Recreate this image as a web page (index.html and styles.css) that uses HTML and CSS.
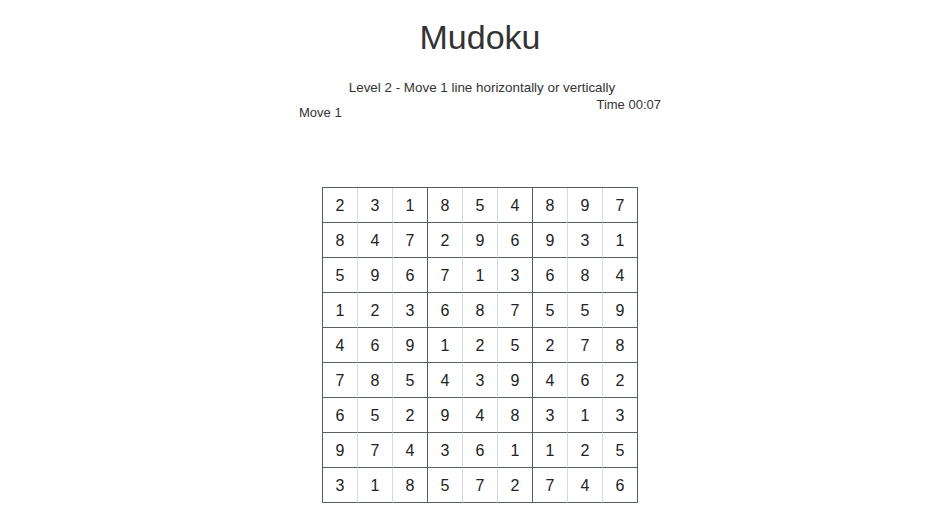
FILE: index.html
```html
<!DOCTYPE html>
<html>
<head>
<meta charset="utf-8">
<title>Mudoku</title>
<link rel="stylesheet" href="styles.css">
</head>
<body>
<div class="page">
  <h1 class="title">Mudoku</h1>
  <div class="level">Level 2 - Move 1 line horizontally or vertically</div>
  <div class="status">
    <span class="moves">Move 1</span>
    <span class="timer">Time 00:07</span>
  </div>
  <div class="board">
    <div class="row"><span>2</span><span>3</span><span>1</span><span>8</span><span>5</span><span>4</span><span>8</span><span>9</span><span>7</span></div>
    <div class="row"><span>8</span><span>4</span><span>7</span><span>2</span><span>9</span><span>6</span><span>9</span><span>3</span><span>1</span></div>
    <div class="row"><span>5</span><span>9</span><span>6</span><span>7</span><span>1</span><span>3</span><span>6</span><span>8</span><span>4</span></div>
    <div class="row"><span>1</span><span>2</span><span>3</span><span>6</span><span>8</span><span>7</span><span>5</span><span>5</span><span>9</span></div>
    <div class="row"><span>4</span><span>6</span><span>9</span><span>1</span><span>2</span><span>5</span><span>2</span><span>7</span><span>8</span></div>
    <div class="row"><span>7</span><span>8</span><span>5</span><span>4</span><span>3</span><span>9</span><span>4</span><span>6</span><span>2</span></div>
    <div class="row"><span>6</span><span>5</span><span>2</span><span>9</span><span>4</span><span>8</span><span>3</span><span>1</span><span>3</span></div>
    <div class="row"><span>9</span><span>7</span><span>4</span><span>3</span><span>6</span><span>1</span><span>1</span><span>2</span><span>5</span></div>
    <div class="row"><span>3</span><span>1</span><span>8</span><span>5</span><span>7</span><span>2</span><span>7</span><span>4</span><span>6</span></div>
  </div>
</div>
</body>
</html>
```
FILE: styles.css
```css
html, body {
  margin: 0;
  padding: 0;
  background: #ffffff;
}
body {
  font-family: "Liberation Sans", Arial, sans-serif;
  color: #333333;
}
.page {
  padding-left: 20px;
  display: flex;
  flex-direction: column;
  align-items: center;
}
.title {
  margin: 18px 0 0 0;
  font-size: 34px;
  line-height: 38px;
  font-weight: normal;
  color: #333333;
}
.level {
  margin-top: 24px;
  padding-left: 4px;
  font-size: 13.4px;
  line-height: 15px;
  color: #333333;
}
.status {
  width: 362px;
  display: flex;
  justify-content: space-between;
  align-items: flex-start;
  font-size: 13px;
  line-height: 15px;
  color: #333333;
}
.timer {
  margin-top: 2px;
}
.moves {
  margin-top: 10px;
}
.board {
  margin-top: 67px;
  display: flex;
  flex-direction: column;
  border-top: 1px solid #555b63;
  border-left: 1px solid #555b63;
}
.row {
  display: flex;
}
.row span {
  width: 34px;
  border-right: 1px solid #d2dce8;
  border-bottom: 1px solid #5a5f66;
  display: flex;
  align-items: center;
  justify-content: center;
  font-size: 16px;
  color: #222222;
  padding-top: 2px;
  box-sizing: content-box;
  height: 32px;
}
.row span:nth-child(3n) {
  border-right-color: #555b63;
}
```
